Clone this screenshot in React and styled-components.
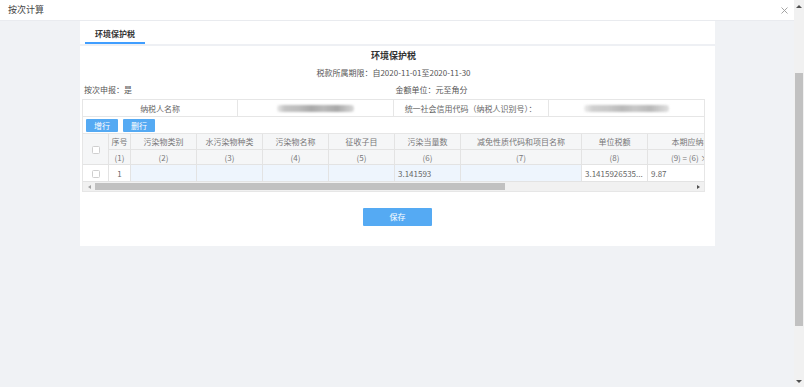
import React from 'react';
import styled, { createGlobalStyle } from 'styled-components';

const Global = createGlobalStyle`
  html, body { margin: 0; padding: 0; overflow: hidden; }
  body { font-family: "Noto Sans CJK SC", "Noto Sans", sans-serif; color: #333; }
  * { box-sizing: border-box; }
`;

const Screen = styled.div`
  width: 804px;
  height: 387px;
  display: flex;
  background: #f0f2f5;
`;

const Main = styled.div`
  flex: 1;
  min-width: 0;
  display: flex;
  flex-direction: column;
`;

const Header = styled.header`
  height: 21px;
  flex-shrink: 0;
  background: #fff;
  border-bottom: 1px solid #e9ebef;
  display: flex;
  align-items: center;
  justify-content: space-between;
  padding: 0 6px 0 8px;
`;

const HeaderTitle = styled.span`
  font-size: 9px;
  line-height: 12px;
  color: #444;
`;

const Close = styled.svg`
  width: 7px;
  height: 7px;
  display: block;
`;

const Content = styled.div`
  flex: 1;
  padding-left: 80px;
`;

const Panel = styled.section`
  width: 635px;
  height: 225px;
  background: #fff;
  display: flex;
  flex-direction: column;
`;

const TabBar = styled.div`
  display: flex;
  padding-left: 5px;
  border-bottom: 2px solid #eef0f4;
`;

const Tab = styled.div`
  width: 60px;
  height: 23px;
  padding-top: 4px;
  line-height: 17px;
  text-align: center;
  font-size: 8px;
  font-weight: bold;
  color: #333;
  border-bottom: 2px solid ${p => (p.$active ? '#409eff' : 'transparent')};
`;

const Body = styled.div`
  padding: 0 10px 0 2px;
  display: flex;
  flex-direction: column;
`;

const Title = styled.div`
  margin-top: 4px;
  font-size: 9px;
  font-weight: bold;
  line-height: 12px;
  text-align: center;
  color: #333;
`;

const Period = styled.div`
  margin-top: 5px;
  font-size: 8px;
  line-height: 12px;
  text-align: center;
  color: #555;
`;

const InfoRow = styled.div`
  margin-top: 5px;
  display: grid;
  grid-template-columns: 1fr 1fr;
  font-size: 8px;
  line-height: 12px;
  color: #555;
`;

const InfoItem = styled.span`
  padding-left: 2px;
`;

const Frame = styled.div`
  margin-top: 3px;
  border: 1px solid #e6e6e6;
`;

const TaxRow = styled.div`
  height: 17px;
  display: grid;
  grid-template-columns: repeat(4, 1fr);
  border-bottom: 1px solid #e6e6e6;
`;

const TaxCell = styled.div`
  display: flex;
  align-items: center;
  justify-content: center;
  font-size: 8px;
  color: #666;
  white-space: nowrap;
  border-right: ${p => (p.$last ? 'none' : '1px solid #e6e6e6')};
`;

const Blob = styled.span`
  display: block;
  width: ${p => p.$w}px;
  height: 7px;
  border-radius: 3px;
  background: linear-gradient(90deg, #e9e9e9 0%, #c4c4c4 10%, #bdbdbd 28%, #a9a9a9 45%, #bababa 60%, #a8a8a8 78%, #d8d8d8 100%);
  filter: blur(1px);
  opacity: ${p => p.$o};
`;

const Toolbar = styled.div`
  height: 17px;
  display: flex;
  align-items: center;
  gap: 5px;
  padding-left: 3px;
  border-bottom: 1px solid #e6e6e6;
`;

const SmallButton = styled.button`
  width: 32px;
  height: 13px;
  padding: 0;
  border: none;
  border-radius: 1px;
  background: #55aaf3;
  color: #fff;
  font-family: inherit;
  font-size: 8px;
  line-height: 13px;
`;

const GridWrap = styled.div`
  overflow: hidden;
`;

const Grid = styled.table`
  table-layout: fixed;
  width: 962px;
  border-collapse: separate;
  border-spacing: 0;
  font-size: 8px;
  color: #666;
`;

const Th = styled.th`
  height: ${p => p.$h}px;
  padding: 0 2px;
  font-weight: normal;
  text-align: center;
  white-space: nowrap;
  overflow: hidden;
  background: #f5f6f7;
  border-right: 1px solid #e3e3e3;
  border-bottom: 1px solid #e3e3e3;
  color: #777;
`;

const Td = styled.td`
  height: 17px;
  padding: 0 3px;
  white-space: nowrap;
  overflow: hidden;
  text-align: ${p => (p.$center ? 'center' : 'left')};
  background: ${p => (p.$edit ? '#eef5fd' : '#fff')};
  border-right: 1px solid #e3e3e3;
  border-bottom: 1px solid #e3e3e3;
  color: #666;
`;

const Check = styled.span`
  display: inline-block;
  width: 8px;
  height: 8px;
  border: 1px solid #cfcfcf;
  border-radius: 1.5px;
  background: #fff;
  vertical-align: middle;
`;

const HScroll = styled.div`
  height: 9px;
  display: flex;
  align-items: center;
  background: #f1f1f1;
`;

const ArrowBox = styled.div`
  width: 12px;
  height: 9px;
  display: flex;
  align-items: center;
  justify-content: center;
  flex-shrink: 0;
`;

const Tri = styled.span`
  width: 0;
  height: 0;
  border-style: solid;
  ${p => p.$dir === 'left' && 'border-width: 2px 3px 2px 0; border-color: transparent #a3a3a3 transparent transparent;'}
  ${p => p.$dir === 'right' && 'border-width: 2px 0 2px 3px; border-color: transparent transparent transparent #505050;'}
  ${p => p.$dir === 'up' && 'border-width: 0 3px 3px 3px; border-color: transparent transparent #505050 transparent;'}
  ${p => p.$dir === 'down' && 'border-width: 3px 3px 0 3px; border-color: #505050 transparent transparent transparent;'}
`;

const HTrack = styled.div`
  flex: 1;
  height: 7px;
`;

const HThumb = styled.div`
  width: 410px;
  height: 7px;
  background: #c1c1c1;
`;

const SaveRow = styled.div`
  display: flex;
  justify-content: center;
  margin-top: 16px;
`;

const SaveButton = styled.button`
  width: 69px;
  height: 18px;
  padding: 0;
  border: none;
  border-radius: 1px;
  background: #55aaf3;
  color: #fff;
  font-family: inherit;
  font-size: 8px;
  line-height: 18px;
`;

const VScroll = styled.aside`
  width: 10px;
  height: 387px;
  flex-shrink: 0;
  background: #f1f1f1;
  display: flex;
  flex-direction: column;
`;

const VArrow = styled.div`
  height: 12px;
  display: flex;
  align-items: center;
  justify-content: center;
`;

const VTrack = styled.div`
  flex: 1;
  padding: 61px 1px 0;
`;

const VThumb = styled.div`
  height: 253px;
  background: #c1c1c1;
`;

const columns = [
  { w: 26 },
  { w: 22, t: '序号', n: '(1)' },
  { w: 66, t: '污染物类别', n: '(2)' },
  { w: 66, t: '水污染物种类', n: '(3)' },
  { w: 66, t: '污染物名称', n: '(4)' },
  { w: 66, t: '征收子目', n: '(5)' },
  { w: 66, t: '污染当量数', n: '(6)' },
  { w: 121, t: '减免性质代码和项目名称', n: '(7)' },
  { w: 66, t: '单位税额', n: '(8)' },
  { w: 96, t: '本期应纳税额', n: '(9) = (6) × (8)' },
  { w: 96, t: '本期减免税额', n: '(10)' },
  { w: 96, t: '本期已缴税额', n: '(11)' },
  { w: 109, t: '本期应补（退）税额', n: '(12)' },
];

const row = [
  { v: '1', center: true },
  { v: '', edit: true },
  { v: '', edit: true },
  { v: '', edit: true },
  { v: '', edit: true },
  { v: '3.141593', edit: true },
  { v: '', edit: true },
  { v: '3.1415926535...' },
  { v: '9.87' },
  { v: '0.00' },
  { v: '0.00' },
  { v: '9.87' },
];

export default function App() {
  return (
    <Screen>
      <Global />
      <Main>
        <Header>
          <HeaderTitle>按次计算</HeaderTitle>
          <Close viewBox="0 0 7 7">
            <path d="M0.5 0.5 L6.5 6.5 M6.5 0.5 L0.5 6.5" stroke="#9a9a9a" strokeWidth="0.9" fill="none" />
          </Close>
        </Header>
        <Content>
          <Panel>
            <TabBar>
              <Tab $active>环境保护税</Tab>
            </TabBar>
            <Body>
              <Title>环境保护税</Title>
              <Period>税款所属期限：自2020-11-01至2020-11-30</Period>
              <InfoRow>
                <InfoItem>按次申报：是</InfoItem>
                <InfoItem>金额单位：元至角分</InfoItem>
              </InfoRow>
              <Frame>
                <TaxRow>
                  <TaxCell>纳税人名称</TaxCell>
                  <TaxCell><Blob $w={77} $o={1} /></TaxCell>
                  <TaxCell>统一社会信用代码（纳税人识别号）：</TaxCell>
                  <TaxCell $last><Blob $w={85} $o={0.8} /></TaxCell>
                </TaxRow>
                <Toolbar>
                  <SmallButton>增行</SmallButton>
                  <SmallButton>删行</SmallButton>
                </Toolbar>
                <GridWrap>
                  <Grid>
                    <colgroup>
                      {columns.map((c, i) => (
                        <col key={i} style={{ width: c.w }} />
                      ))}
                    </colgroup>
                    <thead>
                      <tr>
                        <Th rowSpan={2} $h={31}><Check /></Th>
                        {columns.slice(1).map((c, i) => (
                          <Th key={i} $h={16}>{c.t}</Th>
                        ))}
                      </tr>
                      <tr>
                        {columns.slice(1).map((c, i) => (
                          <Th key={i} $h={15}>{c.n}</Th>
                        ))}
                      </tr>
                    </thead>
                    <tbody>
                      <tr>
                        <Td $center><Check /></Td>
                        {row.map((c, i) => (
                          <Td key={i} $center={c.center} $edit={c.edit}>{c.v}</Td>
                        ))}
                      </tr>
                    </tbody>
                  </Grid>
                </GridWrap>
                <HScroll>
                  <ArrowBox><Tri $dir="left" /></ArrowBox>
                  <HTrack><HThumb /></HTrack>
                  <ArrowBox><Tri $dir="right" /></ArrowBox>
                </HScroll>
              </Frame>
            </Body>
            <SaveRow>
              <SaveButton>保存</SaveButton>
            </SaveRow>
          </Panel>
        </Content>
      </Main>
      <VScroll>
        <VArrow><Tri $dir="up" /></VArrow>
        <VTrack><VThumb /></VTrack>
        <VArrow><Tri $dir="down" /></VArrow>
      </VScroll>
    </Screen>
  );
}
